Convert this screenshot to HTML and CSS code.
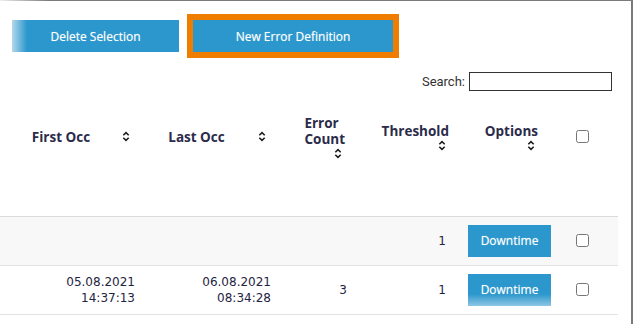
FILE: index.html
```html
<!DOCTYPE html>
<html lang="en">
<head>
    <meta charset="UTF-8">
    <meta name="viewport" content="width=device-width, initial-scale=1.0">
    <title>Error Definitions</title>
    <link rel="stylesheet" href="styles.css">
</head>
<body>
    <div class="window">
        <!-- Acciones -->
        <div class="toolbar">
            <button class="btn btn-delete">Delete Selection</button>
            <div class="highlight">
                <button class="btn btn-new">New Error Definition</button>
            </div>
        </div>

        <!-- Busqueda -->
        <div class="search-bar">
            <label for="search">Search:</label>
            <input type="text" id="search">
        </div>

        <!-- Tabla de errores -->
        <table class="errors">
            <colgroup>
                <col class="c-first">
                <col class="c-last">
                <col class="c-count">
                <col class="c-threshold">
                <col class="c-options">
                <col class="c-check">
            </colgroup>
            <thead>
                <tr>
                    <th class="occ">
                        <div class="th-inner"><span class="label">First Occ</span><svg class="sort" viewBox="0 0 8 11"><path d="M1.3 4.3 L4 1.6 L6.7 4.3 M1.3 6.7 L4 9.4 L6.7 6.7"/></svg></div>
                    </th>
                    <th class="occ occ-last">
                        <div class="th-inner"><span class="label">Last Occ</span><svg class="sort" viewBox="0 0 8 11"><path d="M1.3 4.3 L4 1.6 L6.7 4.3 M1.3 6.7 L4 9.4 L6.7 6.7"/></svg></div>
                    </th>
                    <th class="stack th-count">
                        <div class="stack-inner"><span class="label">Error<br>Count</span><svg class="sort" viewBox="0 0 8 11"><path d="M1.3 4.3 L4 1.6 L6.7 4.3 M1.3 6.7 L4 9.4 L6.7 6.7"/></svg></div>
                    </th>
                    <th class="stack th-threshold">
                        <div class="stack-inner"><span class="label">Threshold</span><svg class="sort" viewBox="0 0 8 11"><path d="M1.3 4.3 L4 1.6 L6.7 4.3 M1.3 6.7 L4 9.4 L6.7 6.7"/></svg></div>
                    </th>
                    <th class="stack th-options">
                        <div class="stack-inner"><span class="label">Options</span><svg class="sort" viewBox="0 0 8 11"><path d="M1.3 4.3 L4 1.6 L6.7 4.3 M1.3 6.7 L4 9.4 L6.7 6.7"/></svg></div>
                    </th>
                    <th class="check"><input type="checkbox"></th>
                </tr>
            </thead>
            <tbody>
                <tr class="odd">
                    <td class="num"></td>
                    <td class="num"></td>
                    <td class="num"></td>
                    <td class="num">1</td>
                    <td class="opt"><button class="btn btn-small">Downtime</button></td>
                    <td class="check"><input type="checkbox"></td>
                </tr>
                <tr>
                    <td class="num">05.08.2021<br>14:37:13</td>
                    <td class="num">06.08.2021<br>08:34:28</td>
                    <td class="num">3</td>
                    <td class="num">1</td>
                    <td class="opt"><button class="btn btn-small btn-fade-bottom">Downtime</button></td>
                    <td class="check"><input type="checkbox"></td>
                </tr>
            </tbody>
        </table>
    </div>
</body>
</html>
```

FILE: styles.css
```css
/* Estilos generales */
body {
    margin: 0;
    padding: 0;
    background-color: #fff;
    font-family: "Open Sans", Arial, sans-serif;
    color: #2b2b4a;
}

/* Ventana con borde gris */
.window {
    box-sizing: border-box;
    width: 633px;
    height: 324px;
    border-top: 1px solid #7a7a7a;
    border-right: 2px solid #8a8a8a;
    border-image: linear-gradient(to right, #f0f0f0, #7a7a7a 50px) 1;
    overflow: hidden;
}

/* Botones */
.btn {
    height: 32px;
    border: none;
    border-radius: 0;
    padding: 0;
    background-color: #2b97cc;
    color: #fff;
    font-family: "Open Sans", Arial, sans-serif;
    font-size: 12px;
    text-shadow: 0 0 1px rgba(255, 255, 255, 0.5);
    cursor: pointer;
}

.toolbar {
    display: flex;
    align-items: center;
    gap: 8px;
    padding: 13px 0 0 12px;
}

.btn-delete {
    width: 167px;
    background: linear-gradient(to right, #b4d8ec 0, #2b97cc 15px);
}

.highlight {
    border: 6px solid #ef7d00;
    line-height: 0;
}

.btn-new {
    width: 200px;
}

/* Busqueda */
.search-bar {
    display: flex;
    justify-content: flex-end;
    align-items: center;
    gap: 4px;
    width: 612px;
    margin-top: 14px;
    font-family: Roboto, Arial, sans-serif;
    font-size: 13px;
    color: #333;
}

.search-bar input {
    box-sizing: border-box;
    width: 143px;
    height: 19px;
    border: 1.5px solid #333;
    border-radius: 0;
    padding: 0 3px;
    outline: none;
}

/* Tabla */
.errors {
    width: 618px;
    margin-top: 7px;
    border-collapse: collapse;
    table-layout: fixed;
}

.c-first { width: 145px; }
.c-last { width: 136px; }
.c-count { width: 76px; }
.c-threshold { width: 99px; }
.c-options { width: 107px; }
.c-check { width: 55px; }

.errors th {
    box-sizing: border-box;
    height: 118px;
    padding: 0 0 40px 0;
    vertical-align: middle;
    font-size: 13.5px;
    font-weight: 700;
    line-height: 16px;
    color: #2b2b4a;
    border-bottom: 1px solid #dcdcdc;
}

.th-inner {
    display: flex;
    align-items: center;
    padding-right: 15px;
}

.th-inner .label {
    flex: 1;
    text-align: center;
}

.occ-last .label {
    padding-right: 10px;
}

.sort {
    width: 8px;
    height: 11px;
    fill: none;
    stroke: #1a1a1a;
    stroke-width: 1.5;
}

.stack {
    text-align: right;
}

.stack-inner {
    display: inline-flex;
    flex-direction: column;
    align-items: flex-end;
    text-align: left;
    gap: 1px;
}

.stack-inner .sort {
    margin-right: 3px;
}

.th-count { padding-right: 12px !important; }
.th-threshold { padding-right: 7px !important; }
.th-options { padding-right: 25px !important; }

.errors .check {
    text-align: left;
    padding-left: 9px;
}

.errors input[type="checkbox"] {
    margin: 3px 3px 3px 4px;
    vertical-align: middle;
}

.errors td {
    height: 48px;
    padding: 0 10px;
    border-bottom: 1px solid #e2e2e2;
    font-family: "DejaVu Sans", Verdana, sans-serif;
    font-size: 12px;
    line-height: 16px;
    color: #1e2442;
    vertical-align: middle;
}

.errors tr.odd td {
    background-color: #f8f8f8;
}

.errors td.num {
    text-align: right;
}

.errors td.opt {
    padding: 0 0 0 12px;
}

.btn-small {
    width: 83px;
    display: block;
}

.btn-fade-bottom {
    background: linear-gradient(to bottom, #2b97cc 20px, #8ec6e4 32px);
}
```
